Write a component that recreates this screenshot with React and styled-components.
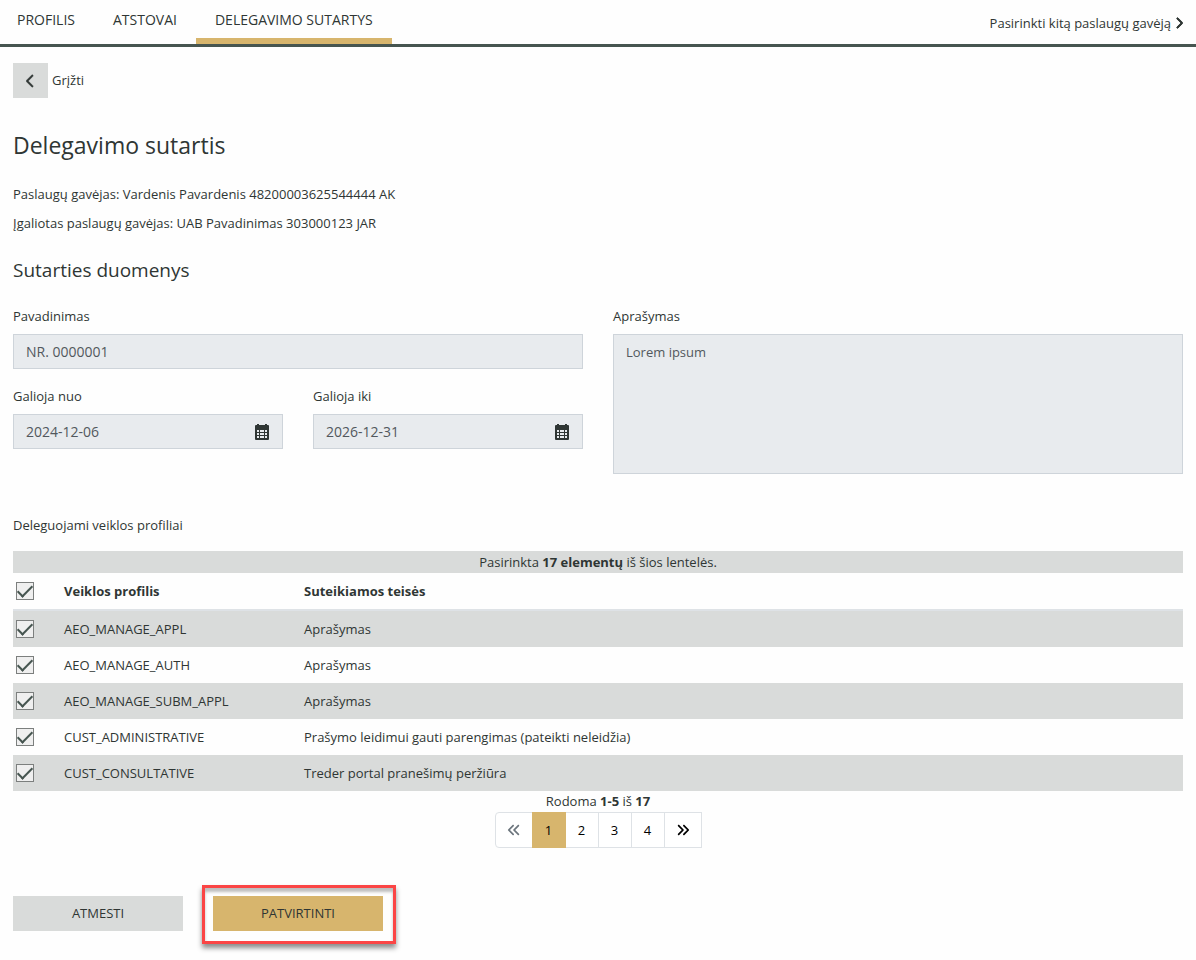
import React, { useState } from "react";
import styled, { createGlobalStyle } from "styled-components";
import {
  FaAnglesLeft,
  FaAnglesRight,
  FaChevronLeft,
  FaChevronRight,
} from "react-icons/fa6";

const tabs = ["Profilis", "Atstovai", "Delegavimo sutartys"];

const profiles = [
  { name: "AEO_MANAGE_APPL", rights: "Aprašymas" },
  { name: "AEO_MANAGE_AUTH", rights: "Aprašymas" },
  { name: "AEO_MANAGE_SUBM_APPL", rights: "Aprašymas" },
  {
    name: "CUST_ADMINISTRATIVE",
    rights: "Prašymo leidimui gauti parengimas (pateikti neleidžia)",
  },
  { name: "CUST_CONSULTATIVE", rights: "Treder portal pranešimų peržiūra" },
];

const CalendarIcon = () => (
  <svg width="16" height="16" viewBox="0 0 16 16" fill="currentColor">
    <path
      fillRule="evenodd"
      d="M3 0h2v1h6V0h2v1h1a1 1 0 0 1 1 1v13a1 1 0 0 1-1 1H2a1 1 0 0 1-1-1V2a1 1 0 0 1 1-1h1zM3 6v2h2V6zm3 0v2h4V6zm5 0v2h2V6zM3 9v2h2V9zm3 0v2h4V9zm5 0v2h2V9zM3 12v2h2v-2zm3 0v2h4v-2zm5 0v2h2v-2z"
    />
  </svg>
);

const App = () => {
  const [page, setPage] = useState(1);
  const [checked, setChecked] = useState(profiles.map(() => true));

  const toggle = (index) =>
    setChecked(checked.map((it, i) => (i === index ? !it : it)));

  const toggleAll = (e) => setChecked(profiles.map(() => e.target.checked));

  return (
    <>
      <GlobalStyle />
      <Header>
        <Tabs>
          {tabs.map((tab, i) => (
            <Tab key={tab} href="#" $active={i === 2}>
              {tab}
            </Tab>
          ))}
        </Tabs>
        <SwitchLink href="#">
          Pasirinkti kitą paslaugų gavėją
          <NextIcon />
        </SwitchLink>
      </Header>

      <Main>
        <Back>
          <BackButton id="back" type="button" aria-label="Grįžti">
            <BackIcon />
          </BackButton>
          <label htmlFor="back">Grįžti</label>
        </Back>

        <Title>Delegavimo sutartis</Title>
        <Info>Paslaugų gavėjas: Vardenis Pavardenis 48200003625544444 AK</Info>
        <Info>Įgaliotas paslaugų gavėjas: UAB Pavadinimas 303000123 JAR</Info>

        <Subtitle>Sutarties duomenys</Subtitle>
        <Columns>
          <Stack>
            <Field>
              <label htmlFor="name">Pavadinimas</label>
              <Input id="name" readOnly value="NR. 0000001" />
            </Field>
            <Columns>
              <Field>
                <label htmlFor="from">Galioja nuo</label>
                <DateBox>
                  <DateInput id="from" readOnly value="2024-12-06" />
                  <CalendarIcon />
                </DateBox>
              </Field>
              <Field>
                <label htmlFor="to">Galioja iki</label>
                <DateBox>
                  <DateInput id="to" readOnly value="2026-12-31" />
                  <CalendarIcon />
                </DateBox>
              </Field>
            </Columns>
          </Stack>
          <Field>
            <label htmlFor="description">Aprašymas</label>
            <TextArea id="description" readOnly value="Lorem ipsum" />
          </Field>
        </Columns>

        <TableTitle>Deleguojami veiklos profiliai</TableTitle>
        <Selected>
          Pasirinkta <b>17 elementų</b> iš šios lentelės.
        </Selected>
        <Table>
          <thead>
            <tr>
              <CheckCell as="th">
                <Checkbox
                  type="checkbox"
                  aria-label="Pasirinkti visus"
                  checked={checked.every(Boolean)}
                  onChange={toggleAll}
                />
              </CheckCell>
              <NameHead>Veiklos profilis</NameHead>
              <th>Suteikiamos teisės</th>
            </tr>
          </thead>
          <tbody>
            {profiles.map((profile, i) => (
              <tr key={profile.name}>
                <CheckCell>
                  <Checkbox
                    type="checkbox"
                    aria-label={profile.name}
                    checked={checked[i]}
                    onChange={() => toggle(i)}
                  />
                </CheckCell>
                <td>{profile.name}</td>
                <td>{profile.rights}</td>
              </tr>
            ))}
          </tbody>
        </Table>

        <Footer>
          <div>
            Rodoma <b>1-5</b> iš <b>17</b>
          </div>
          <Pagination>
            <PageButton
              type="button"
              aria-label="Ankstesnis"
              disabled={page === 1}
              onClick={() => setPage(page - 1)}
            >
              <FaAnglesLeft size={14} />
            </PageButton>
            {[1, 2, 3, 4].map((it) => (
              <PageButton
                key={it}
                type="button"
                $active={it === page}
                onClick={() => setPage(it)}
              >
                {it}
              </PageButton>
            ))}
            <PageButton
              type="button"
              aria-label="Kitas"
              disabled={page === 4}
              onClick={() => setPage(page + 1)}
            >
              <FaAnglesRight size={14} />
            </PageButton>
          </Pagination>
        </Footer>

        <Actions>
          <ActionButton type="button">Atmesti</ActionButton>
          <Highlight>
            <ActionButton type="button" $primary>
              Patvirtinti
            </ActionButton>
          </Highlight>
        </Actions>
      </Main>
    </>
  );
};

export default App;

const GlobalStyle = createGlobalStyle`
  * {
    box-sizing: border-box;
  }

  body {
    margin: 0;
    background-color: #fefefe;
    color: #2f3634;
    font-family: "Open Sans", "Noto Sans", sans-serif;
    font-size: 13px;
    line-height: 21px;
  }

  button, input, textarea {
    font: inherit;
    color: inherit;
  }

  svg {
    display: block;
  }
`;

const Header = styled.header`
  display: flex;
  justify-content: space-between;
  border-bottom: 3px solid #465550;
`;

const Tabs = styled.nav`
  display: flex;
  margin-left: -2px;
`;

const Tab = styled.a`
  height: 44px;
  padding: 9px 19px 0;
  border-bottom: 6px solid ${(props) => (props.$active ? "#d7b56d" : "transparent")};
  color: inherit;
  font-size: 14px;
  font-weight: 500;
  text-decoration: none;
  text-transform: uppercase;
`;

const SwitchLink = styled.a`
  display: flex;
  align-items: center;
  gap: 4px;
  padding: 2px 13px 0 0;
  color: inherit;
  text-decoration: none;
`;

const NextIcon = styled(FaChevronRight)`
  width: 8px;
  height: 12px;
  stroke: currentColor;
  stroke-width: 40px;
`;

const BackIcon = styled(FaChevronLeft)`
  width: 9px;
  height: 14px;
  stroke: currentColor;
  stroke-width: 20px;
`;

const Main = styled.main`
  padding: 16px 13px;
`;

const Back = styled.div`
  display: flex;
  align-items: center;
  gap: 4px;
`;

const BackButton = styled.button`
  display: flex;
  align-items: center;
  justify-content: center;
  width: 35px;
  height: 35px;
  padding: 0;
  border: 0;
  background-color: #d9dbda;
`;

const Title = styled.h1`
  margin: 31px 0 23px;
  font-size: 23px;
  font-weight: 400;
  line-height: 32px;
`;

const Info = styled.p`
  margin: 0 0 8px;
`;

const Subtitle = styled.h2`
  margin: 24px 0;
  font-size: 19px;
  font-weight: 400;
  line-height: 24px;
`;

const Columns = styled.div`
  display: grid;
  grid-template-columns: 1fr 1fr;
  gap: 30px;
`;

const Stack = styled.div`
  display: flex;
  flex-direction: column;
  gap: 17px;
`;

const Field = styled.div`
  display: flex;
  flex-direction: column;
  gap: 7px;
`;

const Input = styled.input`
  width: 100%;
  height: 35px;
  padding: 0 12px;
  border: 1px solid #ced4da;
  border-radius: 0;
  background-color: #e8ebee;
  color: #52585d;
  font-size: 14px;
  outline: none;
`;

const DateBox = styled.div`
  display: flex;
  align-items: center;
  height: 35px;
  padding: 0 12px;
  border: 1px solid #ced4da;
  background-color: #e8ebee;
`;

const DateInput = styled.input`
  flex: 1;
  min-width: 0;
  padding: 0;
  border: 0;
  background: none;
  color: #52585d;
  font-size: 14px;
  outline: none;
`;

const TextArea = styled.textarea`
  height: 140px;
  padding: 7px 12px;
  border: 1px solid #ced4da;
  background-color: #e8ebee;
  color: #52585d;
  outline: none;
  resize: none;
`;

const TableTitle = styled.div`
  margin: 41px 0 15px;
`;

const Selected = styled.div`
  background-color: #d9dbda;
  line-height: 22px;
  text-align: center;
`;

const Table = styled.table`
  width: 100%;
  border-collapse: separate;
  border-spacing: 0;
  text-align: left;

  th,
  td {
    height: 36px;
    padding: 0 3px;
  }

  th {
    height: 38px;
    border-bottom: 2px solid #dee2e6;
  }

  tbody tr:nth-child(odd) {
    background-color: #d9dbda;
  }
`;

const CheckCell = styled.td`
  width: 48px;
`;

const NameHead = styled.th`
  width: 240px;
`;

const Checkbox = styled.input`
  appearance: none;
  display: block;
  position: relative;
  width: 18px;
  height: 18px;
  margin: 0;
  border: 1px solid #7c7f7e;
  background-color: #efefef;

  &:checked::after {
    content: "";
    position: absolute;
    top: -1px;
    left: 4px;
    width: 6px;
    height: 13px;
    border: solid #465550;
    border-width: 0 2px 2px 0;
    transform: rotate(45deg);
  }
`;

const Footer = styled.div`
  display: flex;
  flex-direction: column;
  align-items: center;
`;

const Pagination = styled.div`
  display: flex;
`;

const PageButton = styled.button`
  display: flex;
  align-items: center;
  justify-content: center;
  min-width: 34px;
  height: 36px;
  padding: 0 11px;
  border: 1px solid ${(props) => (props.$active ? "#d7b56d" : "#dee2e6")};
  background-color: ${(props) => (props.$active ? "#d7b56d" : "#fff")};
  color: #000;
  position: relative;
  z-index: ${(props) => (props.$active ? 1 : 0)};

  & + & {
    margin-left: -1px;
  }

  &:first-child {
    border-radius: 4px 0 0 4px;
  }

  &:disabled {
    color: #6c757d;
  }
`;

const Actions = styled.div`
  display: flex;
  align-items: baseline;
  gap: 19px;
  margin-top: 37px;
`;

const ActionButton = styled.button`
  width: 170px;
  height: 35px;
  padding: 0;
  border: 0;
  background-color: ${(props) => (props.$primary ? "#d7b56d" : "#d9dbda")};
  text-transform: uppercase;
`;

/* framed call-out around the main action */
const Highlight = styled.div`
  padding: 8px 10px 10px 8px;
  border: 3px solid #fb4545;
  box-shadow: 0 4px 5px rgba(0, 0, 0, 0.45), inset 0 4px 3px rgba(0, 0, 0, 0.25);
`;
